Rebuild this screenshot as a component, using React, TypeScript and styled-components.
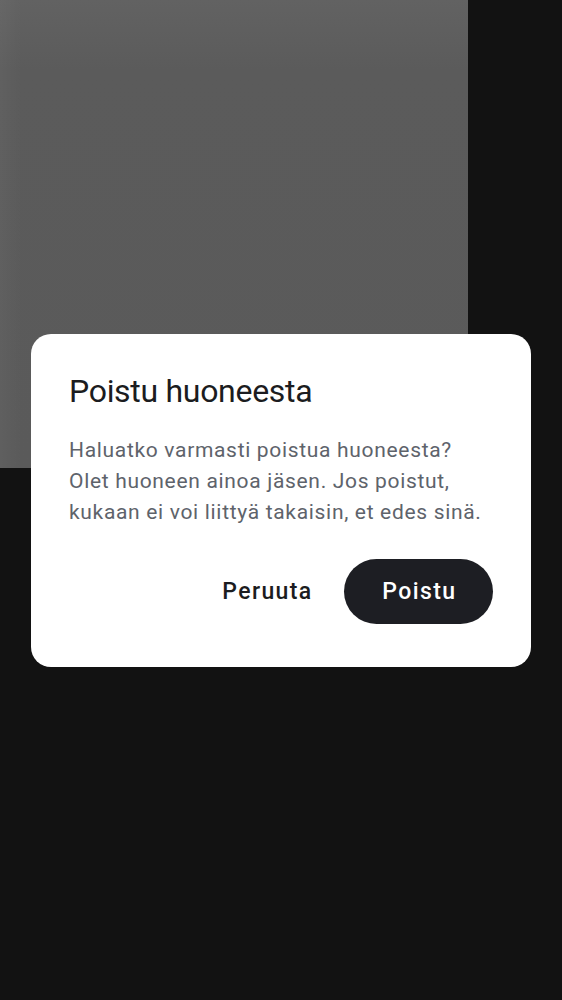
import React from "react";
import styled, { createGlobalStyle } from "styled-components";

const Global = createGlobalStyle`
  html, body { margin: 0; padding: 0; background: #121212; }
  body { font-family: Roboto, "Noto Sans", sans-serif; }
  * { box-sizing: border-box; }
`;

const Page = styled.div`
  position: relative;
  width: 562px;
  height: 1000px;
  background: #121212;
  overflow: hidden;
`;

const Preview = styled.div`
  width: 468px;
  height: 468px;
  background:
    linear-gradient(to right, rgba(255,255,255,0.03), rgba(255,255,255,0) 22px),
    linear-gradient(to bottom, #626262, #5b5b5b 70px, #5a5a5a);
`;

const Overlay = styled.div`
  position: absolute;
  inset: 0;
  display: flex;
  align-items: center;
  justify-content: center;
`;

const Dialog = styled.div`
  width: 500px;
  background: #ffffff;
  border-radius: 20px;
  padding: 36px 38px 43px 38px;
  display: flex;
  flex-direction: column;
`;

const Title = styled.h2`
  margin: 0;
  font-family: Roboto, sans-serif;
  font-weight: 400;
  font-size: 32px;
  line-height: 42px;
  letter-spacing: -0.3px;
  color: #1b1c20;
`;

const Body = styled.p`
  margin: 23px 0 0 0;
  font-family: Roboto, sans-serif;
  font-size: 21px;
  line-height: 31px;
  letter-spacing: 0.68px;
  color: #5e636b;
`;

const Actions = styled.div`
  margin-top: 31px;
  display: flex;
  justify-content: flex-end;
  align-items: center;
`;

const Button = styled.button<{ $filled?: boolean }>`
  height: 65px;
  border: none;
  border-radius: 33px;
  font-family: Roboto, sans-serif;
  font-weight: 500;
  font-size: 23px;
  letter-spacing: 1.4px;
  padding: ${(p) => (p.$filled ? "0 36.6px 0 38px" : "0 31.6px 0 32px")};
  background: ${(p) => (p.$filled ? "#1d1e23" : "transparent")};
  color: ${(p) => (p.$filled ? "#ffffff" : "#1b1c20")};
  cursor: pointer;
`;

export default function App() {
  return (
    <Page>
      <Global />
      <Preview />
      <Overlay>
        <Dialog role="dialog">
          <Title>Poistu huoneesta</Title>
          <Body>
            Haluatko varmasti poistua huoneesta? Olet huoneen ainoa jäsen. Jos poistut, kukaan ei voi liittyä takaisin, et edes sinä.
          </Body>
          <Actions>
            <Button>Peruuta</Button>
            <Button $filled>Poistu</Button>
          </Actions>
        </Dialog>
      </Overlay>
    </Page>
  );
}
